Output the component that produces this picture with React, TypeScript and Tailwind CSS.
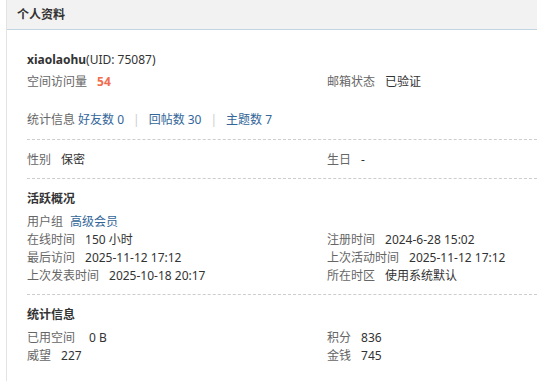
import React from "react";

type Item = { label: string; value: React.ReactNode; gap?: string } | null;

function Field({ item }: { item: Item }) {
  if (!item) return <div className="h-[18px]" />;
  return (
    <div className="h-[18px] whitespace-nowrap">
      <span className={`text-[#666] ${item.gap ?? "mr-[10px]"}`}>{item.label}</span>
      <span className="text-[#333]">{item.value}</span>
    </div>
  );
}

function TwoCol({ items }: { items: Item[] }) {
  return (
    <div className="grid grid-cols-[300px_1fr]">
      {items.map((it, i) => (
        <Field key={i} item={it} />
      ))}
    </div>
  );
}

const link = "text-[#336699]";

export default function App() {
  return (
    <div
      className="min-h-screen bg-white pl-[6px] text-[12px] leading-[18px] text-[#333]"
      style={{ fontFamily: '"Noto Sans", "Noto Sans CJK SC", sans-serif' }}
    >
      <div className="min-h-screen border-l border-[#e3e3e3]">
        <div className="flex h-[30px] items-center border-b border-[#c2d5e3] bg-[#f2f2f2] pl-[10px]">
          <h1 className="font-bold text-[#333]">个人资料</h1>
        </div>

        <div className="pl-[20px]">
          {/* 基本 */}
          <div className="border-b border-dashed border-[#cdcdcd] pb-[10px] pt-[21px]">
            <div className="h-[18px]">
              <span className="font-bold">xiaolaohu</span>
              <span>(UID: 75087)</span>
            </div>
            <div className="mt-[4px]">
              <TwoCol
                items={[
                  { label: "空间访问量", value: <strong className="text-[#f26c4f]">54</strong> },
                  { label: "邮箱状态", value: "已验证" },
                ]}
              />
            </div>
            <div className="mt-[20px] flex h-[18px] items-center whitespace-nowrap">
              <span className="mr-[3px] text-[#666]">统计信息</span>
              <a className={link}>好友数 0</a>
              <span className="px-[9px] text-[#ccc]">|</span>
              <a className={link}>回帖数 30</a>
              <span className="px-[9px] text-[#ccc]">|</span>
              <a className={link}>主题数 7</a>
            </div>
          </div>

          {/* 性别 */}
          <div className="border-b border-dashed border-[#cdcdcd] pb-[9px] pt-[11px]">
            <TwoCol
              items={[
                { label: "性别", value: "保密" },
                { label: "生日", value: "-" },
              ]}
            />
          </div>

          {/* 活跃概况 */}
          <div className="border-b border-dashed border-[#cdcdcd] pb-[9px] pt-[11px]">
            <h2 className="h-[18px] font-bold">活跃概况</h2>
            <div className="mt-[5px]">
              <TwoCol
                items={[
                  { label: "用户组", value: <a className={link}>高级会员</a>, gap: "mr-[7px]" },
                  null,
                  { label: "在线时间", value: "150 小时" },
                  { label: "注册时间", value: "2024-6-28 15:02" },
                  { label: "最后访问", value: "2025-11-12 17:12" },
                  { label: "上次活动时间", value: "2025-11-12 17:12" },
                  { label: "上次发表时间", value: "2025-10-18 20:17" },
                  { label: "所在时区", value: "使用系统默认" },
                ]}
              />
            </div>
          </div>

          {/* 统计信息 */}
          <div className="pb-[9px] pt-[11px]">
            <h2 className="h-[18px] font-bold">统计信息</h2>
            <div className="mt-[5px]">
              <TwoCol
                items={[
                  { label: "已用空间", value: "0 B", gap: "mr-[14px]" },
                  { label: "积分", value: "836" },
                  { label: "威望", value: "227" },
                  { label: "金钱", value: "745" },
                ]}
              />
            </div>
          </div>
        </div>
      </div>
    </div>
  );
}
